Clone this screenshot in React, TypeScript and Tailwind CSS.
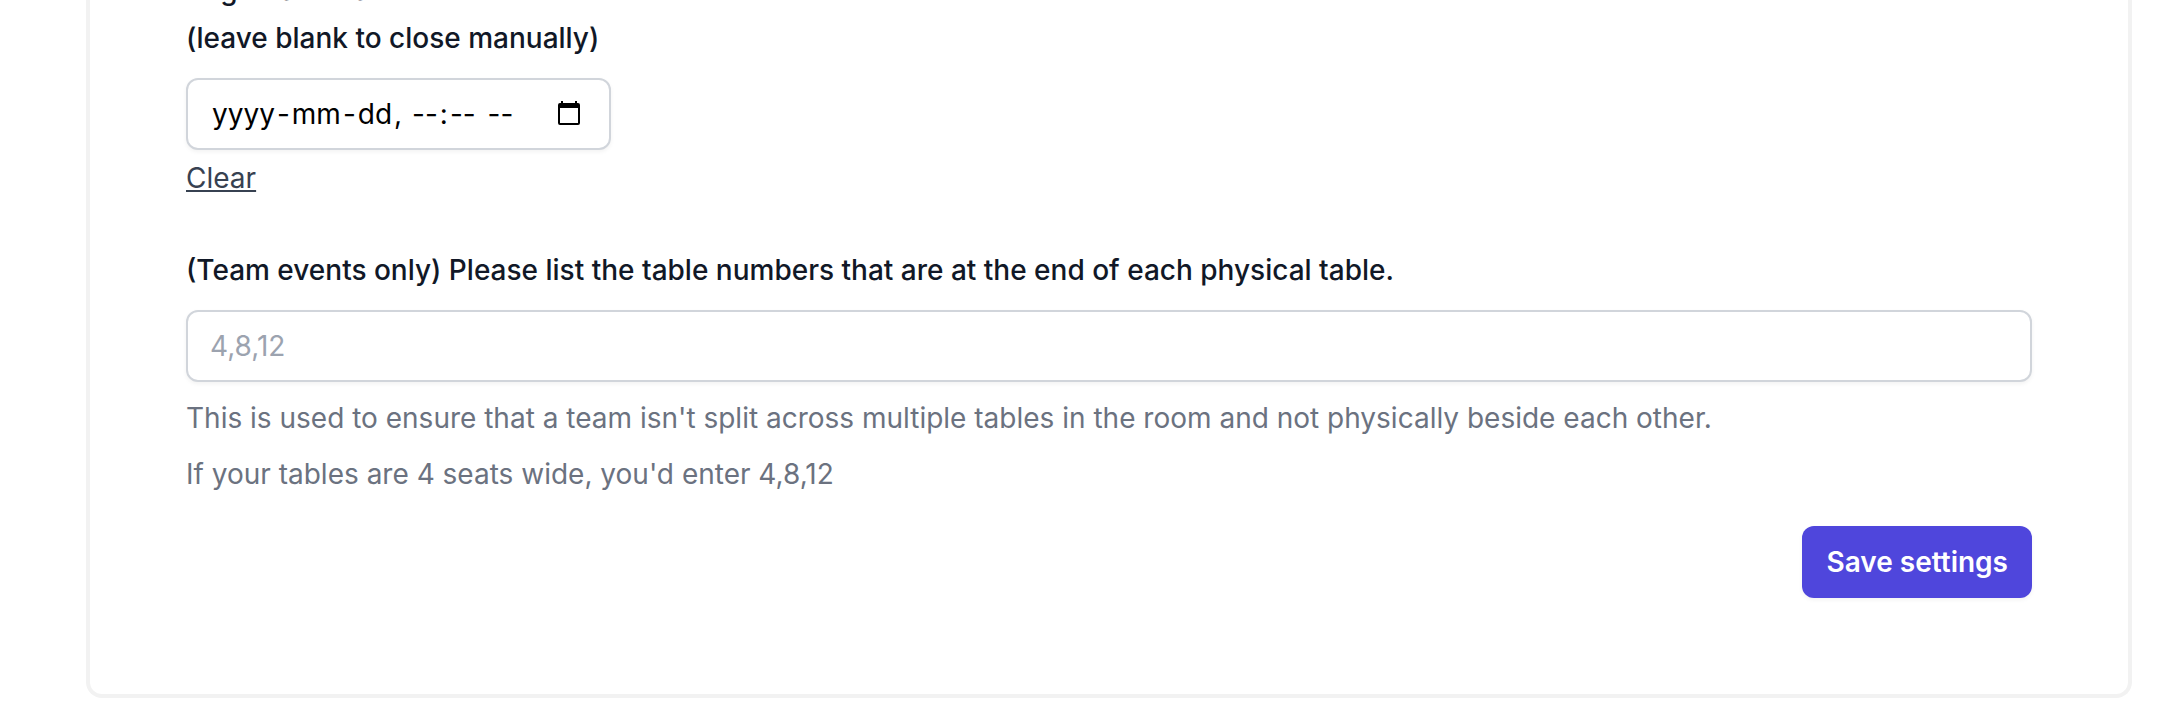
import { Fragment, useState } from "react";

const segments = [
  { name: "year", placeholder: "yyyy", after: "-", max: 4 },
  { name: "month", placeholder: "mm", after: "-", max: 2 },
  { name: "day", placeholder: "dd", after: ", ", max: 2 },
  { name: "hour", placeholder: "--", after: ":", max: 2 },
  { name: "minute", placeholder: "--", after: " ", max: 2 },
  { name: "period", placeholder: "--", after: "", max: 2 },
];

const inputBox =
  "rounded-xl border-2 border-[#d1d5db] bg-white shadow-[0_2px_4px_0_rgba(0,0,0,0.05)]";

const labelText = "block font-medium text-[#111827]";

export default function App() {
  const [closeTime, setCloseTime] = useState<Record<string, string>>({});
  const [endTables, setEndTables] = useState("");

  return (
    <main className="overflow-hidden bg-white pl-[86px] pr-7 font-['Inter',sans-serif] text-[28px] leading-10">
      <form
        onSubmit={(e) => e.preventDefault()}
        className="-mt-[34px] flex flex-col rounded-b-2xl border-4 border-t-0 border-[#f2f2f2] px-24 pb-24"
      >
        {/* Close time */}
        <div className="flex flex-col items-start">
          <label htmlFor="close-year" className={`${labelText} leading-[48px]`}>
            Registration auto-close time
            <br />
            (leave blank to close manually)
          </label>
          <div
            role="group"
            aria-label="Registration auto-close time"
            className={`mt-4 flex h-[72px] w-[425px] items-center justify-between pl-[22px] pr-7 ${inputBox}`}
          >
            <div className="flex items-center text-black">
              {segments.map((s) => (
                <Fragment key={s.name}>
                  <input
                    id={`close-${s.name}`}
                    type="text"
                    aria-label={s.name}
                    maxLength={s.max}
                    value={closeTime[s.name] ?? ""}
                    onChange={(e) => setCloseTime({ ...closeTime, [s.name]: e.target.value })}
                    placeholder={s.placeholder}
                    className="field-sizing-content px-0.5 outline-none placeholder:text-black"
                  />
                  {s.after && <span className="whitespace-pre">{s.after}</span>}
                </Fragment>
              ))}
            </div>
            <button type="button" aria-label="Open calendar">
              <svg width="24" height="26" viewBox="0 0 24 26" className="block">
                <path
                  fill="black"
                  fillRule="evenodd"
                  d="M4 0h2v2h12V0h2v2h1a2 2 0 0 1 2 2v18a2 2 0 0 1-2 2H3a2 2 0 0 1-2-2V4a2 2 0 0 1 2-2h1zM3 7v15h18V7z"
                />
              </svg>
            </button>
          </div>
          <button
            type="button"
            onClick={() => setCloseTime({})}
            className="mt-2 text-[#374151] underline"
          >
            Clear
          </button>
        </div>

        {/* Table ends */}
        <div className="mt-12">
          <label htmlFor="end-tables" className={`${labelText} leading-[48px]`}>
            (Team events only) Please list the table numbers that are at the end of each physical table.
          </label>
          <input
            id="end-tables"
            type="text"
            value={endTables}
            onChange={(e) => setEndTables(e.target.value)}
            placeholder="4,8,12"
            className={`mt-4 block h-[72px] w-full px-[22px] text-[#111827] placeholder:text-[#9ca3af] ${inputBox}`}
          />
          <p className="mt-4 text-[#6b7280]">
            This is used to ensure that a team isn't split across multiple tables in the room and not
            physically beside each other.
          </p>
          <p className="mt-4 text-[#6b7280]">If your tables are 4 seats wide, you'd enter 4,8,12</p>
        </div>

        <div className="mt-8 flex justify-end">
          <button
            type="submit"
            className="rounded-xl bg-[#4f46dc] px-6 py-4 font-semibold text-white shadow-[0_2px_4px_0_rgba(0,0,0,0.05)]"
          >
            Save settings
          </button>
        </div>
      </form>
    </main>
  );
}
